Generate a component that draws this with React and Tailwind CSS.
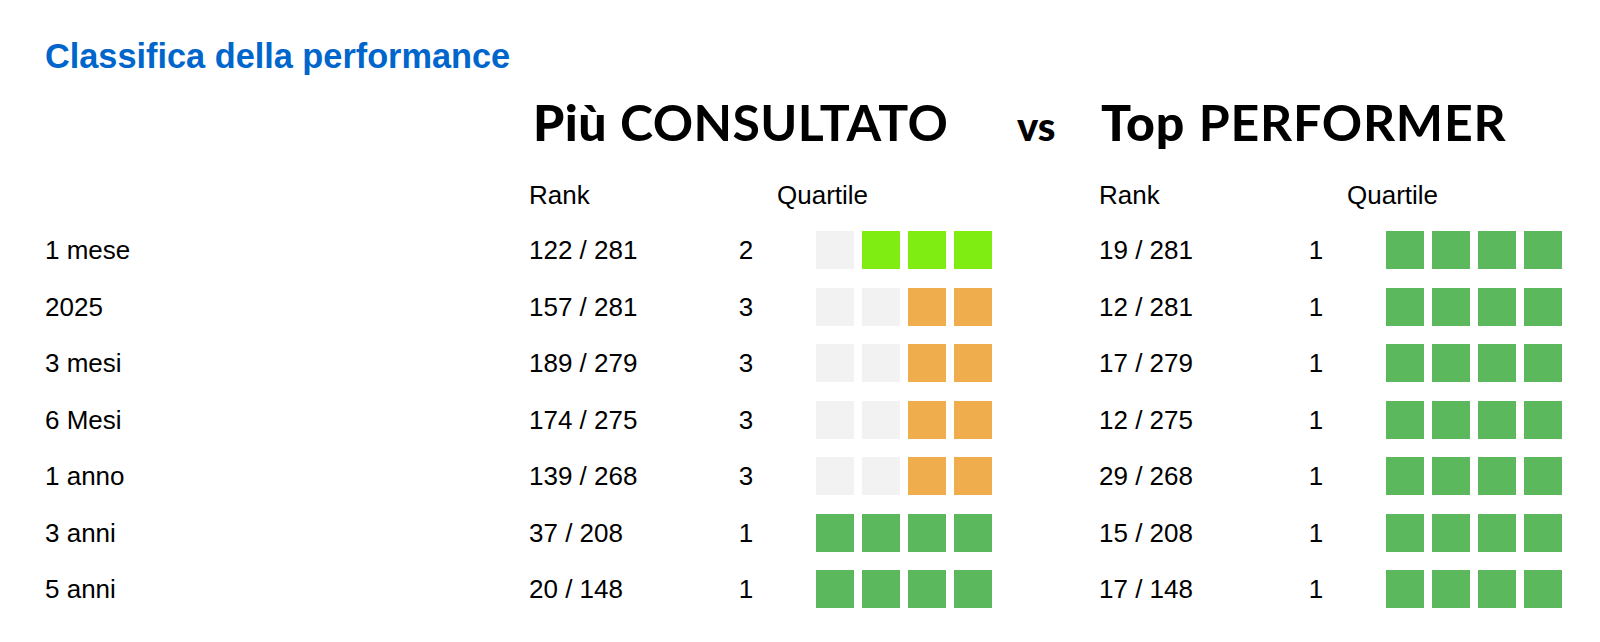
import React from 'react';

const rows = [
  { label: '1 mese', a: { rank: '122 / 281', q: 2 }, b: { rank: '19 / 281', q: 1 } },
  { label: '2025', a: { rank: '157 / 281', q: 3 }, b: { rank: '12 / 281', q: 1 } },
  { label: '3 mesi', a: { rank: '189 / 279', q: 3 }, b: { rank: '17 / 279', q: 1 } },
  { label: '6 Mesi', a: { rank: '174 / 275', q: 3 }, b: { rank: '12 / 275', q: 1 } },
  { label: '1 anno', a: { rank: '139 / 268', q: 3 }, b: { rank: '29 / 268', q: 1 } },
  { label: '3 anni', a: { rank: '37 / 208', q: 1 }, b: { rank: '15 / 208', q: 1 } },
  { label: '5 anni', a: { rank: '20 / 148', q: 1 }, b: { rank: '17 / 148', q: 1 } },
];

const fillColor = {
  1: 'bg-[#5cb85c]',
  2: 'bg-[#7fed12]',
  3: 'bg-[#f0ad4e]',
  4: 'bg-[#d9534f]',
};

const QuartileBoxes = ({ q }) => (
  <div className="flex gap-[8px]">
    {[1, 2, 3, 4].map((i) => (
      <div
        key={i}
        className={`w-[38px] h-[38px] shrink-0 ${i >= q ? fillColor[q] : 'bg-[#f2f2f2]'}`}
      />
    ))}
  </div>
);

const Group = ({ data, last }) => (
  <div className={`flex items-center shrink-0 ${last ? '' : 'w-[570px]'}`}>
    <div className="w-[190px] shrink-0">{data.rank}</div>
    <div className="w-[54px] shrink-0 text-center">{data.q}</div>
    <div className="ml-[43px] shrink-0">
      <QuartileBoxes q={data.q} />
    </div>
  </div>
);

export default function App() {
  return (
    <div
      className="w-[1600px] h-[642px] bg-white text-black pl-[45px] pt-[36px] overflow-hidden"
      style={{ fontFamily: '"Liberation Sans", Arial, sans-serif' }}
    >
      <h2 className="text-[34.3px] leading-[40px] font-bold text-[#0066cc]">
        Classifica della performance
      </h2>

      <div
        className="flex items-baseline ml-[484px] mt-[16px] h-[60px] text-[50px] leading-[60px]"
        style={{ fontFamily: 'Lato, "Open Sans", sans-serif' }}
      >
        <div className="w-[484px] shrink-0 pl-[4px] tracking-[0.4px]">
          <span className="font-black">Più</span>{' '}
          <span className="font-bold">CONSULTATO</span>
        </div>
        <div className="w-[88px] shrink-0 pl-[4px] text-[40px] font-black">vs</div>
        <div className="shrink-0 tracking-[0.8px]">
          <span className="font-black">Top</span>{' '}
          <span className="font-bold">PERFORMER</span>
        </div>
      </div>

      <div className="flex items-center ml-[484px] mt-[28px] h-[30px] text-[26px] leading-[30px]">
        <div className="w-[248px] shrink-0">Rank</div>
        <div className="w-[322px] shrink-0">Quartile</div>
        <div className="w-[248px] shrink-0">Rank</div>
        <div className="shrink-0">Quartile</div>
      </div>

      <div className="mt-[12px] text-[26px] leading-[30px]">
        {rows.map((r) => (
          <div key={r.label} className="flex items-center h-[56.5px]">
            <div className="w-[484px] shrink-0">{r.label}</div>
            <Group data={r.a} />
            <Group data={r.b} last />
          </div>
        ))}
      </div>
    </div>
  );
}
